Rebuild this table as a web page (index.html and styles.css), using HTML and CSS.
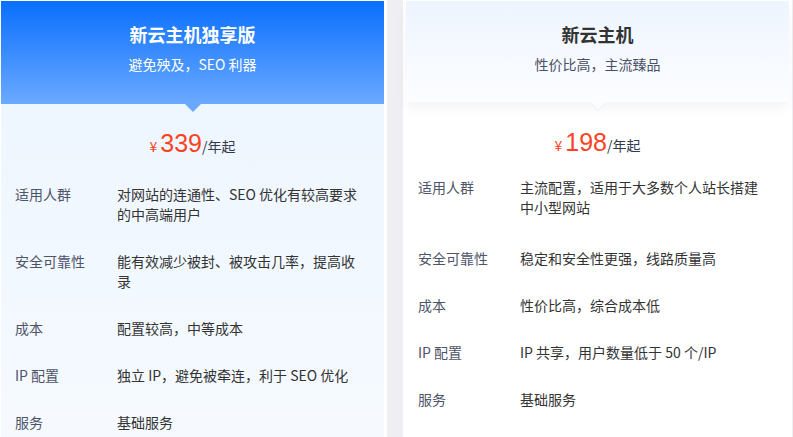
FILE: index.html
```html
<!DOCTYPE html>
<html lang="zh-CN">
<head>
    <meta charset="UTF-8">
    <meta name="viewport" content="width=device-width, initial-scale=1.0">
    <title>新云主机</title>
    <link rel="stylesheet" href="styles.css">
</head>
<body>
    <div class="plans">
        <!-- Exclusive plan -->
        <div class="plan plan-pro">
            <div class="plan-head">
                <div class="plan-title">新云主机独享版</div>
                <div class="plan-desc">避免殃及，SEO 利器</div>
            </div>
            <div class="plan-body">
                <div class="price"><span class="cur">¥</span><span class="num">339</span><span class="unit">/年起</span></div>
                <div class="row"><div class="label">适用人群</div><div class="value">对网站的连通性、SEO 优化有较高要求的中高端用户</div></div>
                <div class="row"><div class="label">安全可靠性</div><div class="value">能有效减少被封、被攻击几率，提高收录</div></div>
                <div class="row"><div class="label">成本</div><div class="value">配置较高，中等成本</div></div>
                <div class="row"><div class="label">IP 配置</div><div class="value">独立 IP，避免被牵连，利于 SEO 优化</div></div>
                <div class="row"><div class="label">服务</div><div class="value">基础服务</div></div>
            </div>
        </div>

        <!-- Basic plan -->
        <div class="plan plan-basic">
            <div class="plan-head">
                <div class="plan-title">新云主机</div>
                <div class="plan-desc">性价比高，主流臻品</div>
            </div>
            <div class="plan-body">
                <div class="price"><span class="cur">¥</span><span class="num">198</span><span class="unit">/年起</span></div>
                <div class="row"><div class="label">适用人群</div><div class="value">主流配置，适用于大多数个人站长搭建中小型网站</div></div>
                <div class="row"><div class="label">安全可靠性</div><div class="value">稳定和安全性更强，线路质量高</div></div>
                <div class="row"><div class="label">成本</div><div class="value">性价比高，综合成本低</div></div>
                <div class="row"><div class="label">IP 配置</div><div class="value">IP 共享，用户数量低于 50 个/IP</div></div>
                <div class="row"><div class="label">服务</div><div class="value">基础服务</div></div>
            </div>
        </div>
    </div>
</body>
</html>
```

FILE: styles.css
```css
body {
    margin: 0;
    padding: 0;
    background: #eeeef3;
    overflow: hidden;
    font-family: "Noto Sans CJK SC", "Liberation Sans", sans-serif;
    font-size: 14px;
}

.plans {
    display: flex;
    gap: 16px;
    height: 437px;
    overflow: hidden;
}

/* Card */
.plan {
    display: flex;
    flex-direction: column;
    background: white;
    padding: 1px 3px 0 1px;
    width: 383px;
}

.plan-basic {
    padding: 1px 3px 0 3px;
}

.plan-head {
    position: relative;
    flex-shrink: 0;
    height: 103px;
    box-sizing: border-box;
    padding-top: 19px;
    text-align: center;
}

.plan-title {
    font-size: 18px;
    font-weight: bold;
    line-height: 28px;
}

.plan-desc {
    margin-top: 6px;
    font-size: 14px;
    line-height: 20px;
}

/* little arrow under the header */
.plan-head::after {
    content: "";
    position: absolute;
    left: 50%;
    bottom: -8px;
    margin-left: -8px;
    border-left: 8px solid transparent;
    border-right: 8px solid transparent;
    border-top: 8px solid #68a8ff;
}

.plan-pro .plan-head {
    background: linear-gradient(to bottom, #0a6ffe, #6aa9ff);
    color: white;
}

.plan-basic .plan-head {
    height: 101px;
    background: linear-gradient(to bottom, #eef5ff, #fcfdff);
    box-shadow: 0 6px 12px rgba(0, 0, 0, 0.045);
    z-index: 1;
}

.plan-basic .plan-head::after {
    border-top-color: #fcfdff;
    filter: drop-shadow(0 1px 0 rgba(0, 0, 0, 0.06));
}

.plan-basic .plan-title {
    color: #333;
}

.plan-basic .plan-desc {
    color: #4a5068;
}

.plan-body {
    flex: 1;
    padding: 0 14px;
}

.plan-pro .plan-body {
    background: linear-gradient(to bottom, #eef6ff, #f6faff);
}

.plan-basic .plan-body {
    padding: 0 12px;
}

/* Price */
.price {
    text-align: center;
    padding: 24px 0 9px;
    line-height: 30px;
    color: #333a4d;
}

.plan-basic .price {
    padding: 25px 0 3px;
}

.price .cur {
    color: #fa4325;
    font-size: 14px;
    margin-right: 3px;
}

.price .num {
    color: #fa4325;
    font-size: 25px;
    font-family: "Liberation Sans", sans-serif;
}

.price .unit {
    font-size: 14px;
}

/* Spec rows */
.row {
    display: flex;
    padding: 14px 0 13px;
    line-height: 20px;
}

.plan-basic .price + .row {
    padding-bottom: 17px;
}

.label {
    width: 102px;
    flex-shrink: 0;
    color: #4e5468;
}

.value {
    width: 245px;
    color: #333;
}
```
